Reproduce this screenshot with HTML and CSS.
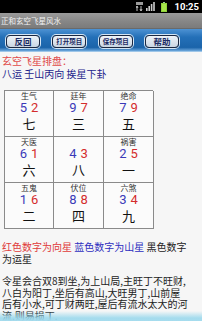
FILE: index.html
```html
<!DOCTYPE html>
<html lang="zh">
<head>
<meta charset="utf-8">
<title>正和玄空飞星风水</title>
<link rel="stylesheet" href="styles.css">
</head>
<body>
<div class="screen">
  <div class="status">
    <svg class="ic-data" width="7" height="9" viewBox="0 0 7 9"><rect x="0" y="0" width="7" height="3" fill="#9a9a9a"/><path d="M1 4v5M1 4l-1 2M1 4l1 2M5 9V4M5 9l-1-2M5 9l1-2" stroke="#bdbdbd" stroke-width="1" fill="none"/></svg>
    <svg class="ic-signal" width="9" height="9" viewBox="0 0 9 9"><rect x="0" y="6" width="1.6" height="3" fill="#ccc"/><rect x="2.4" y="4" width="1.6" height="5" fill="#ccc"/><rect x="4.8" y="2" width="1.6" height="7" fill="#ccc"/><rect x="7.2" y="0" width="1.6" height="9" fill="#ccc"/></svg>
    <svg class="ic-batt" width="6" height="10" viewBox="0 0 6 10"><rect x="2" y="0" width="2" height="1" fill="#9c9"/><rect x="0" y="1" width="6" height="9" fill="#8fd13a"/><rect x="1" y="2" width="4" height="7" fill="#a6e64a"/></svg>
    <span class="time">10:25</span>
  </div>
  <div class="titlebar">正和玄空飞星风水</div>
  <div class="toolbar">
    <button class="btn btn-lg">反回</button>
    <button class="btn btn-sm">打开项目</button>
    <button class="btn btn-sm">保存项目</button>
    <button class="btn btn-lg">帮助</button>
  </div>
  <div class="content">
    <div class="heading">玄空飞星排盘：</div>
    <div class="subheading">八运 壬山丙向 挨星下卦</div>
    <div class="grid">
      <div class="cell"><div class="label">生气</div><div class="nums"><span class="blue">5</span><span class="red">2</span></div><div class="yun">七</div></div>
      <div class="cell"><div class="label">廷年</div><div class="nums"><span class="blue">9</span><span class="red">7</span></div><div class="yun">三</div></div>
      <div class="cell"><div class="label">绝命</div><div class="nums"><span class="blue">7</span><span class="red">9</span></div><div class="yun">五</div></div>
      <div class="cell"><div class="label">天医</div><div class="nums"><span class="blue">6</span><span class="red">1</span></div><div class="yun">六</div></div>
      <div class="cell"><div class="label">&nbsp;</div><div class="nums"><span class="blue">4</span><span class="red">3</span></div><div class="yun">八</div></div>
      <div class="cell"><div class="label">祸害</div><div class="nums"><span class="blue">2</span><span class="red">5</span></div><div class="yun">一</div></div>
      <div class="cell"><div class="label">五鬼</div><div class="nums"><span class="blue">1</span><span class="red">6</span></div><div class="yun">二</div></div>
      <div class="cell"><div class="label">伏位</div><div class="nums"><span class="blue">8</span><span class="red">8</span></div><div class="yun">四</div></div>
      <div class="cell"><div class="label">六煞</div><div class="nums"><span class="blue">3</span><span class="red">4</span></div><div class="yun">九</div></div>
    </div>
    <p class="legend"><span class="red-t">红色数字为向星</span> <span class="blue-t">蓝色数字为山星</span> <span class="black-t">黑色数字为运星</span></p>
    <p class="desc">令星会合双8到坐,为上山局,主旺丁不旺财,八白为阳丁,坐后有高山,大旺男丁,山前屋后有小水,可丁财两旺,屋后有流水太大的河流,则易损丁.</p>
  </div>
  <div class="glow"></div>
</div>
</body>
</html>
```

FILE: styles.css
```css
* { box-sizing: border-box; }
html, body { margin: 0; padding: 0; }
body {
  width: 202px;
  height: 321px;
  overflow: hidden;
  background: #f6f6f6;
  font-family: "Noto Sans CJK SC", "Noto Sans", sans-serif;
}
.screen {
  position: relative;
  width: 202px;
  height: 321px;
  overflow: hidden;
}
.status {
  height: 13px;
  background: #000;
  display: flex;
  align-items: center;
  justify-content: flex-end;
  padding-right: 3px;
}
.ic-data { margin-right: 3px; }
.ic-signal { margin-right: 6px; }
.ic-batt { margin-right: 8px; }
.time {
  color: #fff;
  font-family: "Roboto", "DejaVu Sans", sans-serif;
  font-weight: bold;
  font-size: 9.5px;
  line-height: 13px;
}
.titlebar {
  height: 16px;
  background: linear-gradient(#9a9a9a, #858585 60%, #7b7b7b);
  color: #f2f2f2;
  font-size: 7.5px;
  line-height: 16px;
  padding-left: 1px;
  border-bottom: 1px solid #6a6a6a;
}
.toolbar {
  height: 23px;
  background: linear-gradient(#4d92d3, #2470b8 35%, #1b64aa 80%, #6fa9dd 96%, #d6e8f6);
  display: flex;
  align-items: center;
  justify-content: space-between;
  padding: 1px 23px 0 6px;
}
.btn {
  width: 34px;
  height: 13px;
  padding: 0;
  border: 1px solid #1c2840;
  border-radius: 4px;
  background: linear-gradient(#eef3f8, #c9d6e3);
  box-shadow: 0 0 0 1px #d4e5f4;
  color: #1b2a62;
  font-family: "Noto Sans CJK SC", sans-serif;
  font-weight: bold;
  line-height: 11px;
}
.btn-lg { font-size: 8.5px; }
.btn-sm { font-size: 6.5px; }
.content {
  padding: 3px 0 0 2px;
  width: 189px;
}
.heading {
  color: #e04a4a;
  font-size: 10px;
  line-height: 12px;
}
.subheading {
  color: #1c1c8c;
  font-size: 10px;
  line-height: 13px;
}
.grid {
  margin: 10px 0 0 2px;
  display: grid;
  grid-template-columns: 49px 50px 50px;
  width: 149px;
  border-left: 1px solid #8a8a8a;
  border-top: 1px solid #8a8a8a;
  background: #fbfbfb;
}
.cell {
  height: 46px;
  border-right: 1px solid #8a8a8a;
  border-bottom: 1px solid #8a8a8a;
  display: flex;
  flex-direction: column;
  align-items: center;
}
.label {
  font-size: 8px;
  line-height: 10px;
  color: #333;
}
.nums {
  display: flex;
  gap: 4px;
  font-family: "Roboto", "Noto Sans", sans-serif;
  font-size: 13px;
  line-height: 14px;
}
.blue { color: #3a3ab8; }
.red { color: #d42c2c; }
.yun {
  font-size: 13px;
  line-height: 17px;
  color: #111;
}
.legend {
  margin: 12px 0 0 0;
  font-size: 10px;
  line-height: 12px;
}
.red-t { color: #e03a3a; }
.blue-t { color: #2e2ec0; }
.black-t { color: #222; }
.desc {
  margin: 10px 0 0 0;
  font-size: 10px;
  line-height: 11.5px;
  color: #222;
}
.glow {
  position: absolute;
  left: 0;
  right: 0;
  bottom: 0;
  height: 10px;
  background: linear-gradient(rgba(160, 220, 238, 0), rgba(150, 215, 236, 0.85) 70%, #a6dcee);
}
```
